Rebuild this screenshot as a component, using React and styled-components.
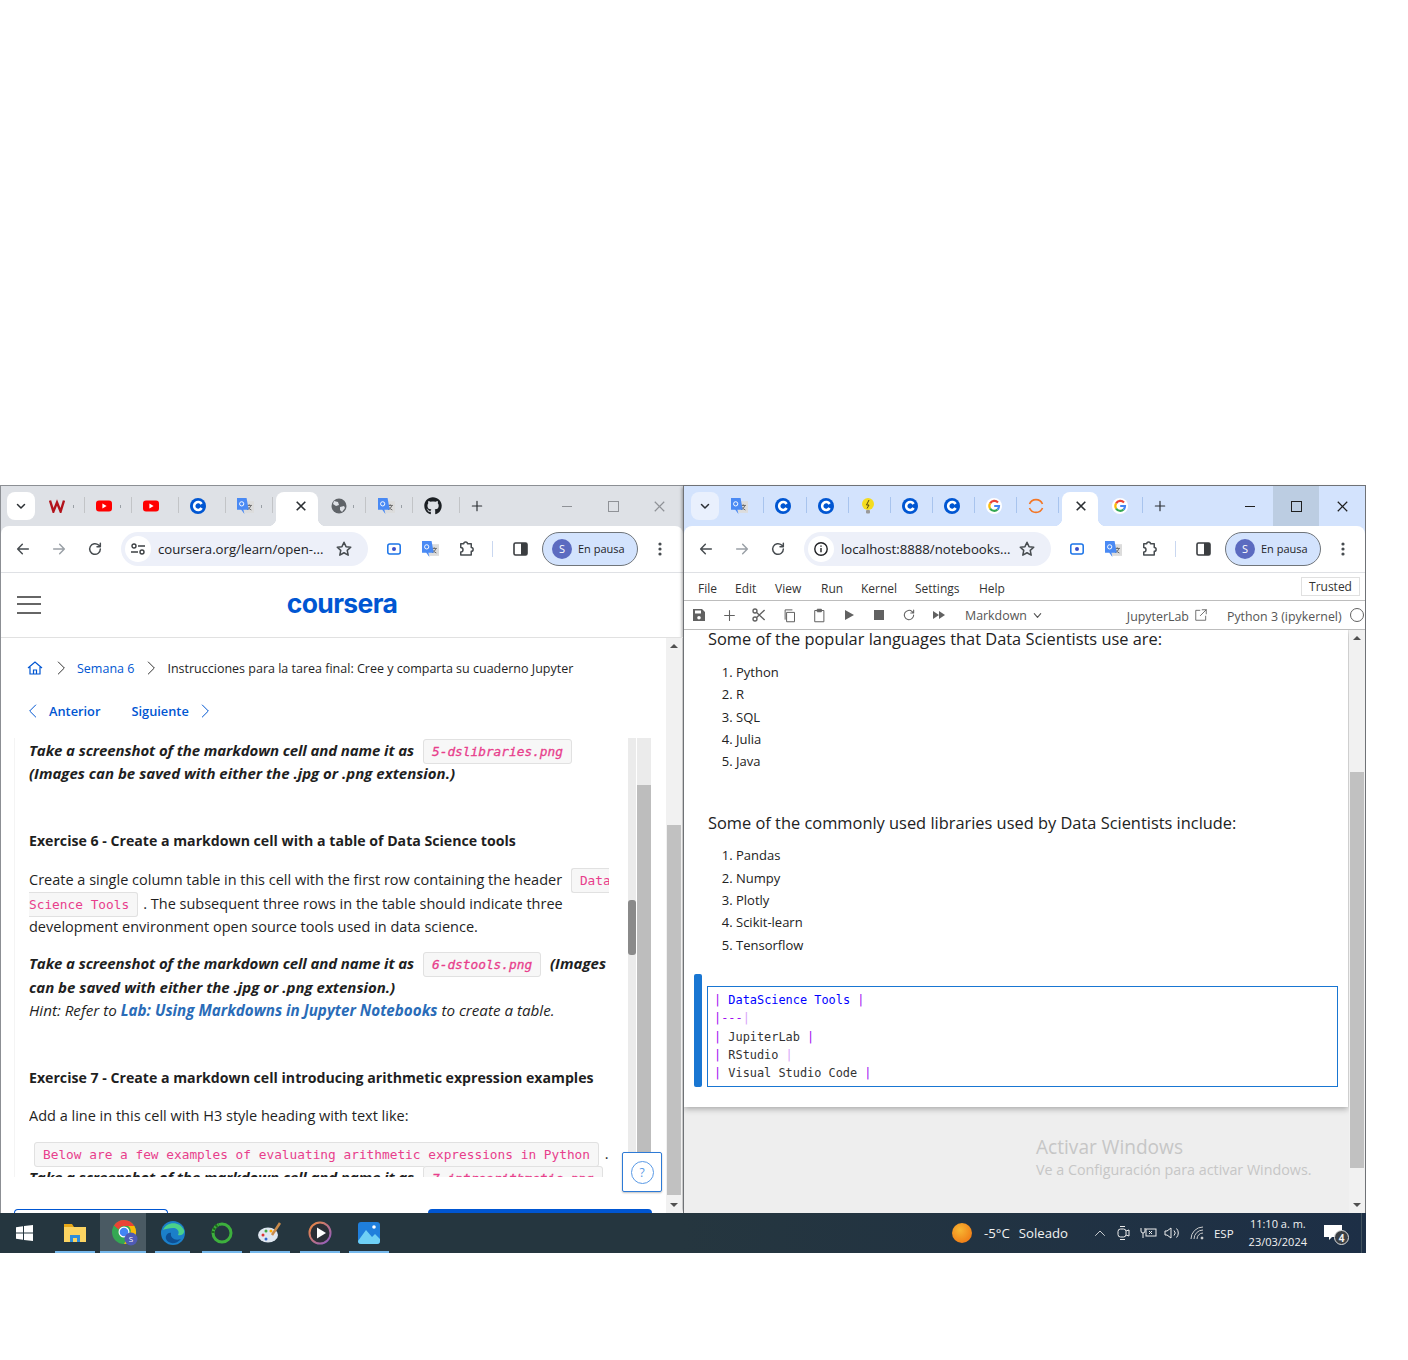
import React from "react";
import styled, { createGlobalStyle } from "styled-components";
import { FaGithub } from "react-icons/fa";

const uiFont = `"Open Sans", "Noto Sans", sans-serif`;
const monoFont = `"DejaVu Sans Mono", "Liberation Mono", monospace`;

const Global = createGlobalStyle`
  html, body { margin: 0; padding: 0; background: #fff; }
  body { font-family: ${uiFont}; width: 1408px; height: 1360px; overflow: hidden; }
`;

const Desktop = styled.div`
  width: 1366px;
  height: 768px;
  margin-top: 485px;
  display: flex;
  flex-direction: column;
`;

const Windows = styled.div`
  display: flex;
  height: 728px;
`;

const Win = styled.div`
  width: 683px;
  display: flex;
  flex-direction: column;
  border: 1px solid ${p => p.$edge};
  border-bottom: 0;
  border-right-width: ${p => p.$rightEdge}px;
  box-sizing: border-box;
  background: #fff;
  overflow: hidden;
  box-shadow: ${p => (p.$front ? "-3px 0 3px -2px rgba(0, 0, 0, 0.35)" : "none")};
`;

const TabStrip = styled.div`
  height: 40px;
  flex: none;
  display: flex;
  align-items: center;
  padding-left: ${p => p.$pad}px;
  background: ${p => p.$bg};
  color: #2b2f33;
`;

const TabMenu = styled.div`
  width: 28px;
  height: 28px;
  margin-right: 3px;
  border-radius: 8px;
  background: ${p => p.$bg};
  display: flex;
  align-items: center;
  justify-content: center;
`;

const Tab = styled.div`
  width: ${p => p.$w}px;
  height: 40px;
  box-sizing: border-box;
  padding-left: ${p => p.$pad}px;
  display: flex;
  align-items: center;
  flex: none;
  position: relative;
  &::after {
    content: "";
    position: absolute;
    right: 0;
    top: 11px;
    height: 16px;
    width: 1px;
    background: ${p => p.$sep};
  }
`;

const TabDot = styled.span`
  position: absolute;
  left: 35px;
  top: 19px;
  width: 1px;
  height: 3px;
  background: #9aa0a6;
`;

const ActiveTab = styled.div`
  width: ${p => p.$w}px;
  height: 34px;
  margin: 6px 0 0 ${p => p.$left}px;
  flex: none;
  background: #fff;
  border-radius: 8px 8px 0 0;
  display: flex;
  align-items: center;
  justify-content: center;
  padding: 0 0 6px ${p => p.$nudge}px;
  box-sizing: border-box;
  position: relative;
  &::before, &::after {
    content: "";
    position: absolute;
    bottom: 0;
    width: 8px;
    height: 8px;
  }
  &::before {
    left: -8px;
    background: radial-gradient(circle at 0 0, transparent 8px, #fff 8.5px);
  }
  &::after {
    right: -8px;
    background: radial-gradient(circle at 100% 0, transparent 8px, #fff 8.5px);
  }
`;

const NewTab = styled.div`
  width: 34px;
  display: flex;
  justify-content: center;
  flex: none;
`;

const WinControls = styled.div`
  margin: 0 ${p => p.$right}px 0 auto;
  display: flex;
  height: 40px;
`;

const WinButton = styled.div`
  width: 46px;
  height: 40px;
  display: flex;
  align-items: center;
  justify-content: center;
  background: ${p => (p.$hover ? "#bccde2" : "transparent")};
  color: ${p => p.$color};
`;

const ToolbarBack = styled.div`
  background: ${p => p.$bg};
  flex: none;
`;

const Toolbar = styled.div`
  height: 47px;
  box-sizing: border-box;
  background: #fff;
  border-radius: 8px 8px 0 0;
  border-bottom: 1px solid #dfe1e5;
  display: flex;
  align-items: center;
  padding-left: 4px;
  color: #474c50;
`;

const Slot = styled.div`
  width: 36px;
  height: 36px;
  flex: none;
  margin-left: ${p => p.$left || 0}px;
  margin-right: ${p => p.$right || 0}px;
  display: flex;
  align-items: center;
  justify-content: center;
  color: ${p => p.$color || "inherit"};
`;

const UrlPill = styled.div`
  width: 247px;
  height: 34px;
  margin-left: 8px;
  flex: none;
  border-radius: 17px;
  background: #edf0f9;
  display: flex;
  align-items: center;
  padding-left: 4px;
  box-sizing: border-box;
`;

const SiteChip = styled.div`
  width: 26px;
  height: 26px;
  border-radius: 50%;
  background: #fff;
  display: flex;
  align-items: center;
  justify-content: center;
  flex: none;
`;

const UrlText = styled.div`
  margin-left: 7px;
  font-size: 13.2px;
  color: #202124;
  white-space: nowrap;
  flex: 1;
`;

const Sep = styled.div`
  width: 1px;
  height: 16px;
  margin: 0 9px 0 8px;
  background: #c9d7f0;
  flex: none;
`;

const Profile = styled.div`
  width: 96px;
  height: 34px;
  margin-left: 4px;
  border-radius: 17px;
  background: #d3e3fd;
  border: 1px solid #70757a;
  box-sizing: border-box;
  display: flex;
  align-items: center;
  padding: 0 0 1px 9px;
  flex: none;
  font-size: 11px;
  color: #1f2328;
`;

const Avatar = styled.div`
  width: 20px;
  height: 20px;
  border-radius: 50%;
  background: #5c6bc0;
  color: #fff;
  font-size: 11px;
  display: flex;
  align-items: center;
  justify-content: center;
  margin-right: 6px;
  flex: none;
`;

/* coursera side */
const SiteHeader = styled.div`
  height: 64px;
  flex: none;
  border-bottom: 1px solid #e1e1e1;
  box-sizing: content-box;
  position: relative;
  display: flex;
  align-items: center;
  justify-content: center;
`;

const Burger = styled.div`
  position: absolute;
  left: 16px;
  top: 23px;
  width: 24px;
  height: 18px;
  border-top: 2px solid #666;
  border-bottom: 2px solid #666;
  box-sizing: border-box;
  &::after {
    content: "";
    display: block;
    margin-top: 5px;
    border-top: 2px solid #666;
  }
`;

const Logo = styled.div`
  font-family: Inter, "Liberation Sans", sans-serif;
  font-weight: 700;
  font-size: 26.5px;
  letter-spacing: -0.65px;
  color: #0056d2;
  line-height: 1;
  margin-top: -4px;
`;

const PageBody = styled.div`
  flex: 1;
  display: flex;
  min-height: 0;
  position: relative;
`;

const PageMain = styled.div`
  width: 665px;
  flex: none;
  display: flex;
  flex-direction: column;
`;

const Crumbs = styled.div`
  display: flex;
  align-items: center;
  height: 20px;
  margin: 20px 0 0 26px;
  font-size: 12.5px;
  color: #1f1f1f;
  white-space: nowrap;
`;

const CrumbLink = styled.span`
  color: #0056d2;
`;

const CrumbChevron = styled.span`
  display: flex;
  margin: 0 ${p => p.$right}px 0 ${p => p.$left}px;
  color: #333;
`;

const PrevNext = styled.div`
  display: flex;
  align-items: center;
  height: 20px;
  margin: 23px 0 0 24px;
  font-size: 12.8px;
  font-weight: 600;
  color: #0056d2;
`;

const Gap = styled.span`
  display: flex;
  align-items: center;
  margin-left: ${p => p.$left}px;
  padding-top: ${p => p.$drop || 0}px;
`;

const Reading = styled.div`
  display: flex;
  height: 439px;
  margin-top: 17px;
  margin-left: 13px;
  border-left: 1px solid #f4f4f4;
`;

const ReadingText = styled.div`
  width: 580px;
  margin-left: 14px;
  overflow: hidden;
  flex: none;
  font-size: 14.5px;
  line-height: 23.4px;
  color: #1f1f1f;
  white-space: nowrap;
`;

const Para = styled.p`
  margin: ${p => p.$top || 0}px 0 0;
  font-size: ${p => p.$size || 14.5}px;
  font-weight: ${p => (p.$strong ? 700 : 400)};
  font-style: ${p => (p.$italic ? "italic" : "normal")};
`;

const Lead = styled.span`
  letter-spacing: -0.11px;
`;

const Code = styled.code`
  font-family: ${monoFont};
  font-size: 12.8px;
  line-height: 1;
  font-weight: 400;
  font-style: ${p => (p.$slant ? "italic" : "normal")};
  -webkit-text-stroke: ${p => (p.$slant ? "0.3px" : "0")};
  color: #e83e8c;
  background: #f7f7f7;
  border: 1px solid #e1e1e1;
  border-radius: 3px;
  padding: 4px 8px;
  margin: 0 ${p => p.$right || 5}px 0 5px;
`;

const DocLink = styled.span`
  color: #2a6cb8;
  font-weight: 700;
`;

const DoubleTrack = styled.div`
  display: flex;
  margin-left: 19px;
  gap: 1px;
`;

const Track = styled.div`
  width: ${p => p.$w}px;
  background: #ebebeb;
  height: 100%;
  overflow: hidden;
`;

const Thumb = styled.div`
  margin-top: ${p => p.$top}px;
  height: ${p => p.$h}px;
  background: ${p => p.$color};
  border-radius: ${p => p.$round || 0}px;
`;

const BottomBars = styled.div`
  display: flex;
  margin: auto 0 0 13px;
  height: 4px;
`;

const OutlineBar = styled.div`
  width: 154px;
  border: 1px solid #0056d2;
  border-bottom: 0;
  border-radius: 4px 4px 0 0;
  box-sizing: border-box;
`;

const SolidBar = styled.div`
  width: 224px;
  margin-left: 260px;
  background: #0056d2;
  border-radius: 4px 4px 0 0;
`;

const HelpButton = styled.div`
  position: absolute;
  left: 621px;
  top: 514px;
  width: 40px;
  height: 40px;
  box-sizing: border-box;
  border: 1px solid #2d7ad6;
  border-radius: 2px;
  background: #fff;
  box-shadow: 0 1px 2px rgba(0, 0, 0, 0.25);
  display: flex;
  align-items: center;
  justify-content: center;
`;

const HelpCircle = styled.div`
  width: 23px;
  height: 23px;
  box-sizing: border-box;
  border-radius: 50%;
  border: 1px solid #5a9ae6;
  color: #5a9ae6;
  font-size: 12px;
  display: flex;
  align-items: center;
  justify-content: center;
`;

const ScrollBar = styled.div`
  flex: none;
  width: ${p => p.$w}px;
  background: #f1f1f1;
  display: flex;
  flex-direction: column;
  align-items: center;
  padding: 0 1px;
  box-sizing: border-box;
`;

const ScrollArrow = styled.div`
  flex: none;
  height: ${p => p.$h}px;
  width: 100%;
  margin-top: ${p => (p.$up ? "0" : "auto")};
  display: flex;
  align-items: center;
  justify-content: center;
  &::after {
    content: "";
    border-left: 4px solid transparent;
    border-right: 4px solid transparent;
    border-${p => (p.$up ? "bottom" : "top")}: 4px solid #505050;
  }
`;

const ScrollThumb = styled.div`
  width: 100%;
  height: ${p => p.$h}px;
  margin-top: ${p => p.$top}px;
  background: #c1c1c1;
  flex: none;
`;

/* notebook side */
const MenuBar = styled.div`
  height: 28px;
  box-sizing: border-box;
  flex: none;
  display: flex;
  align-items: center;
  border-bottom: 1px solid #bdbdbd;
  font-size: 12px;
  color: #333;
  padding-left: 14px;
  position: relative;
`;

const MenuItem = styled.span`
  width: ${p => p.$w}px;
  flex: none;
  padding-top: 4px;
`;

const TrustedBox = styled.div`
  position: absolute;
  right: 5px;
  top: 4px;
  width: 59px;
  height: 19px;
  box-sizing: border-box;
  border: 1px solid #e0e0e0;
  display: flex;
  align-items: center;
  justify-content: center;
  font-size: 12px;
  color: #333;
`;

const NbTools = styled.div`
  height: 29px;
  box-sizing: border-box;
  flex: none;
  display: flex;
  align-items: center;
  border-bottom: 1px solid #bdbdbd;
  font-size: 12.4px;
  color: #555;
  white-space: nowrap;
`;

const NbIcon = styled.div`
  width: 30px;
  flex: none;
  display: flex;
  justify-content: center;
  color: #616161;
`;

const KernelCircle = styled.div`
  width: 14px;
  height: 14px;
  border: 1.5px solid #616161;
  border-radius: 50%;
  box-sizing: border-box;
  margin-left: 8px;
  flex: none;
`;

const NbArea = styled.div`
  flex: 1;
  display: flex;
  background: #eeeeee;
  min-height: 0;
`;

const NbScroll = styled.div`
  width: 665px;
  flex: none;
  overflow: hidden;
`;

const Sheet = styled.div`
  height: 477px;
  width: 664px;
  background: #fff;
  box-shadow: 0 2px 6px rgba(0, 0, 0, 0.3);
  padding: 0 0 0 24px;
  box-sizing: border-box;
  color: #222;
`;

const NbHeading = styled.div`
  font-size: 16.4px;
  line-height: 18px;
  margin-top: ${p => p.$top}px;
  white-space: nowrap;
`;

const NbList = styled.ol`
  margin: ${p => p.$top}px 0 0;
  padding: 0 0 0 28px;
  font-size: 13px;
  line-height: 22.3px;
`;

const Cell = styled.div`
  display: flex;
  margin: 18px 0 0 -14px;
  align-items: flex-end;
`;

const Collapser = styled.div`
  width: 8px;
  height: 113px;
  background: #1976d2;
  border-radius: 2px;
  flex: none;
`;

const Editor = styled.div`
  width: 631px;
  height: 101px;
  margin-left: 5px;
  box-sizing: border-box;
  border: 1px solid #1976d2;
  padding: 4px 0 0 6px;
  font-family: ${monoFont};
  font-size: 11.9px;
  line-height: 18.3px;
  color: #333;
  white-space: pre;
`;

const Bar = styled.span`
  color: #a010f0;
  opacity: ${p => (p.$dim ? 0.4 : 1)};
`;

const Head = styled.span`
  color: #0000ff;
`;

const Watermark = styled.div`
  margin: 28px 0 0 352px;
  color: #c6c6c6;
  white-space: nowrap;
`;

const WatermarkTitle = styled.div`
  font-size: 19.1px;
  line-height: 24px;
`;

const WatermarkSub = styled.div`
  font-size: 14.3px;
  line-height: 22px;
`;

/* taskbar */
const Taskbar = styled.div`
  height: 40px;
  flex: none;
  display: flex;
  align-items: center;
  background: linear-gradient(90deg, #25363f 0%, #25363f 50%, #1d2f46 100%);
  color: #fff;
  position: relative;
`;

const StartButton = styled.div`
  width: 49px;
  display: flex;
  justify-content: center;
  flex: none;
`;

const TaskIcon = styled.div`
  width: ${p => p.$w}px;
  height: 40px;
  margin-left: ${p => p.$left || 0}px;
  padding-left: ${p => p.$nudge || 0}px;
  flex: none;
  display: flex;
  align-items: center;
  justify-content: center;
  box-sizing: border-box;
  position: relative;
  background: ${p => (p.$active ? "#4a5a63" : "transparent")};
  &::after {
    content: "";
    position: absolute;
    bottom: 0;
    left: ${p => (p.$active ? 0 : 3)}px;
    right: ${p => (p.$active ? 0 : 3)}px;
    height: 2px;
    background: #76b9ed;
  }
`;

const Tray = styled.div`
  margin-left: auto;
  display: flex;
  align-items: center;
  height: 40px;
  font-size: 13.2px;
  color: #f2f2f2;
  white-space: nowrap;
`;

const Sun = styled.div`
  width: 20px;
  height: 20px;
  border-radius: 50%;
  background: radial-gradient(circle at 40% 35%, #f7b733, #ee6c0e);
  margin-right: 12px;
`;

const TrayGap = styled.span`
  margin-left: ${p => p.$w}px;
  display: flex;
  align-items: center;
`;

const Lang = styled.span`
  margin-left: 10px;
  font-size: 11.5px;
`;

const Clock = styled.div`
  font-size: 11px;
  line-height: 18px;
  text-align: center;
  margin-left: 15px;
`;

const Notify = styled.div`
  width: 32px;
  margin-left: 10px;
  position: relative;
  display: flex;
  justify-content: center;
`;

const NotifyCount = styled.div`
  position: absolute;
  left: 17px;
  top: 5px;
  width: 15px;
  height: 15px;
  border-radius: 50%;
  background: #3a3f44;
  border: 1px solid #ddd;
  box-sizing: border-box;
  font-size: 10px;
  font-weight: 700;
  display: flex;
  align-items: center;
  justify-content: center;
`;

const TrayEnd = styled.div`
  width: 1px;
  height: 40px;
  margin: 0 4px 0 12px;
  background: #41535f;
`;

const Ic = ({ s = 16, w = 24, children, fill = "none", stroke = "currentColor", sw = 2 }) => (
  <svg width={s} height={s} viewBox={`0 0 ${w} ${w}`} fill={fill} stroke={stroke} strokeWidth={sw} strokeLinecap="round" strokeLinejoin="round">
    {children}
  </svg>
);

const CourseraIcon = () => (
  <svg width="16" height="16" viewBox="0 0 16 16">
    <circle cx="8" cy="8" r="8" fill="#0056d2" />
    <path d="M11.6 6A4 4 0 1 0 11.6 10" fill="none" stroke="#fff" strokeWidth="2.6" />
  </svg>
);

const TranslateIcon = ({ s = 17 }) => (
  <svg width={s} height={s} viewBox="0 0 16 16">
    <rect x="6" y="3" width="10" height="11" fill="#dcdcdc" />
    <path d="M9 7h5M11.5 6v1M13 7c-.5 2-2 3.500-3.500 4M10 8.500c.8 1.200 2 2.200 3.500 2.800" stroke="#666" strokeWidth=".9" fill="none" />
    <path d="M0 0h9l2 11H6l1 4-3-4H0z" fill="#4a8af4" />
    <circle cx="4.400" cy="5.500" r="2" fill="none" stroke="#fff" strokeWidth=".9" />
  </svg>
);

const GoogleIcon = () => (
  <svg width="16" height="16" viewBox="0 0 16 16">
    <circle cx="8" cy="8" r="8" fill="#fff" />
    <g fill="none" strokeWidth="2.2">
      <path d="M12 4.400A5 5 0 0 0 4.100 5.400" stroke="#ea4335" />
      <path d="M4.100 5.400A5 5 0 0 0 4.100 10.600" stroke="#fbbc05" />
      <path d="M4.100 10.600A5 5 0 0 0 11.600 11.500" stroke="#34a853" />
      <path d="M11.600 11.500A5 5 0 0 0 13 8H8.200" stroke="#4285f4" />
    </g>
  </svg>
);

const WikiIcon = () => (
  <svg width="16" height="14" viewBox="0 0 16 14">
    <path d="M1 1.500l3.400 11 3.600-9 3.600 9 3.400-11" fill="none" stroke="#b3131b" strokeWidth="2.4" />
  </svg>
);

const YoutubeIcon = () => (
  <svg width="16" height="12" viewBox="0 0 16 12">
    <rect width="16" height="11" y=".5" rx="3" fill="#f00" />
    <path d="M6.400 3.500v5L10.600 6z" fill="#fff" />
  </svg>
);

const GlobeIcon = () => (
  <svg width="16" height="16" viewBox="0 0 16 16">
    <circle cx="8" cy="8" r="7.500" fill="#5f6368" />
    <path d="M3 3l4 1 1 3-3 1-3-2zM9 9l4-1 1 2-3 4-2-2z" fill="#dee1e6" />
  </svg>
);

const BulbIcon = () => (
  <svg width="16" height="18" viewBox="0 0 16 18">
    <circle cx="8" cy="7" r="6" fill="#f4dc1f" />
    <rect x="6" y="13" width="4" height="3.500" rx="1" fill="#9a9a9a" />
    <path d="M9 3L6.500 8H9L7 11.500" stroke="#5a4a10" fill="none" />
  </svg>
);

const RingIcon = () => (
  <svg width="16" height="16" viewBox="0 0 16 16">
    <path d="M1.500 6A7 7 0 0 1 14.500 6M14.500 10A7 7 0 0 1 1.500 10" fill="none" stroke="#f37726" strokeWidth="1.6" />
  </svg>
);

const CloseX = ({ s = 10, sw = 1.6 }) => (
  <svg width={s} height={s} viewBox="0 0 10 10" stroke="currentColor" strokeWidth={sw}>
    <path d="M.7.7l8.600 8.600M9.300.7L.7 9.300" />
  </svg>
);

const ChevronRight = ({ s = 16, sw = 1.5 }) => (
  <Ic s={s} sw={sw}><path d="M8 3l9 9-9 9" /></Ic>
);

const ChevronLeft = ({ s = 16, sw = 1.5 }) => (
  <Ic s={s} sw={sw}><path d="M16 3l-9 9 9 9" /></Ic>
);

const tabIcons = {
  wiki: <WikiIcon />,
  yt: <YoutubeIcon />,
  cou: <CourseraIcon />,
  tr: <TranslateIcon />,
  globe: <GlobeIcon />,
  gh: <FaGithub size={18} color="#1b1f23" />,
  bulb: <BulbIcon />,
  goog: <GoogleIcon />,
  ring: <RingIcon />,
};

const Strip = ({ bg, menuBg, sep, pad, before, activeW, activeLeft, nudge, after, controlColor, controlsRight, hoverMax }) => (
  <TabStrip $bg={bg} $pad={pad}>
    <TabMenu $bg={menuBg}>
      <Ic s={12} sw={3}><path d="M5 9l7 7 7-7" /></Ic>
    </TabMenu>
    {before.map(([icon, w, tabPad, dot], i) => (
      <Tab key={i} $w={w} $pad={tabPad} $sep={sep}>{tabIcons[icon]}{dot && <TabDot />}</Tab>
    ))}
    <ActiveTab $w={activeW} $left={activeLeft} $nudge={nudge}><CloseX /></ActiveTab>
    {after.map(([icon, w, tabPad, dot], i) => (
      <Tab key={i} $w={w} $pad={tabPad} $sep={sep}>{tabIcons[icon]}{dot && <TabDot />}</Tab>
    ))}
    <NewTab><Ic s={14}><path d="M12 4v16M4 12h16" /></Ic></NewTab>
    <WinControls $right={controlsRight}>
      <WinButton $color={controlColor}><svg width="10" height="10" stroke="currentColor"><path d="M0 5.500h10" /></svg></WinButton>
      <WinButton $color={controlColor} $hover={hoverMax}><svg width="11" height="11" fill="none" stroke="currentColor"><rect x=".5" y=".5" width="10" height="10" /></svg></WinButton>
      <WinButton $color={controlColor}><CloseX s={11} sw={1.1} /></WinButton>
    </WinControls>
  </TabStrip>
);

const Address = ({ bg, chip, url }) => (
  <ToolbarBack $bg={bg}>
    <Toolbar>
      <Slot><Ic s={16} sw={2.2}><path d="M20 12H5M11 5l-7 7 7 7" /></Ic></Slot>
      <Slot $color="#9aa0a6"><Ic s={16} sw={2.2}><path d="M4 12h15M13 5l7 7-7 7" /></Ic></Slot>
      <Slot><Ic s={16} sw={2.2}><path d="M20 12a8 8 0 1 1-2.600-5.900L20 8.500M20 3.500v5h-5" /></Ic></Slot>
      <UrlPill>
        <SiteChip>{chip}</SiteChip>
        <UrlText>{url}</UrlText>
        <Slot $left={-8} $right={6}><Ic s={18} sw={2}><path d="M12 3l2.700 5.900 6.300.7-4.700 4.300 1.300 6.300L12 17l-5.600 3.200 1.300-6.300L3 9.600l6.300-.7z" /></Ic></Slot>
      </UrlPill>
      <Slot $left={8}>
        <svg width="14" height="12" viewBox="0 0 14 12"><rect x=".8" y="1" width="12.400" height="10" rx="2" fill="none" stroke="#1a73e8" strokeWidth="1.5" /><circle cx="7" cy="6" r="2" fill="#3c4fc9" /></svg>
      </Slot>
      <Slot><TranslateIcon /></Slot>
      <Slot>
        <Ic s={18} sw={2}><path d="M9 5a2.500 2.500 0 0 1 5 0h5v5a2.500 2.500 0 0 1 0 5v5H5v-4a2.500 2.500 0 0 0 0-6V5z" /></Ic>
      </Slot>
      <Sep />
      <Slot>
        <svg width="15" height="14" viewBox="0 0 15 14"><rect x="1" y="1" width="13" height="12" rx="1.500" fill="#fff" stroke="#3a3d40" strokeWidth="1.6" /><rect x="8" y="1" width="6" height="12" fill="#3a3d40" /></svg>
      </Slot>
      <Profile><Avatar>S</Avatar>En pausa</Profile>
      <Slot $left={4}>
        <svg width="4" height="14" viewBox="0 0 4 14" fill="currentColor"><circle cx="2" cy="2" r="1.600" /><circle cx="2" cy="7" r="1.600" /><circle cx="2" cy="12" r="1.600" /></svg>
      </Slot>
    </Toolbar>
  </ToolbarBack>
);

const SiteTuneIcon = () => (
  <svg width="14" height="12" viewBox="0 0 14 12" fill="none" stroke="#3c4043" strokeWidth="1.4">
    <circle cx="3" cy="3" r="2" /><path d="M7 3h7M0 9h7" /><circle cx="11" cy="9" r="2" />
  </svg>
);

const InfoIcon = () => (
  <svg width="14" height="14" viewBox="0 0 14 14" fill="none" stroke="#202124" strokeWidth="1.4">
    <circle cx="7" cy="7" r="6.200" /><path d="M7 6v4.200M7 3.400v1.400" />
  </svg>
);

const LeftWindow = () => (
  <Win $edge="#8c8f94" $rightEdge={0}>
    <Strip
      bg="#dee1e6"
      menuBg="#fff"
      sep="#c2c4c7"
      pad={6}
      before={[["wiki", 47, 11, true], ["yt", 47, 11, true], ["yt", 47, 11], ["cou", 47, 11], ["tr", 47, 11, true]]}
      activeW={42}
      activeLeft={3}
      nudge={8}
      after={[["globe", 48, 13, true], ["tr", 47, 12, true], ["gh", 47, 11]]}
      controlColor="#8f9297"
      controlsRight={1}
    />
    <Address bg="#dee1e6" chip={<SiteTuneIcon />} url="coursera.org/learn/open-..." />
    <SiteHeader>
      <Burger />
      <Logo>coursera</Logo>
    </SiteHeader>
    <PageBody>
      <PageMain>
        <Crumbs>
          <svg width="16" height="14" viewBox="0 0 16 14" fill="none" stroke="#0056d2" strokeWidth="1.2"><path d="M1 7l7-6 7 6M3 6v7h10V6M6.500 13V9h3v4" /></svg>
          <CrumbChevron $left={10} $right={8}><ChevronRight /></CrumbChevron>
          <CrumbLink>Semana 6</CrumbLink>
          <CrumbChevron $left={9} $right={8}><ChevronRight /></CrumbChevron>
          <span>Instrucciones para la tarea final: Cree y comparta su cuaderno Jupyter</span>
        </Crumbs>
        <PrevNext>
          <ChevronLeft />
          <Gap $left={8}>Anterior</Gap>
          <Gap $left={31}>Siguiente</Gap>
          <Gap $left={8}><ChevronRight /></Gap>
        </PrevNext>
        <Reading>
          <ReadingText>
            <Para $strong $italic $size={15} $top={1}>
              <Lead>Take a screenshot of the markdown cell and name it as</Lead> <Code $slant>5-dslibraries.png</Code><br />
              (Images can be saved with either the .jpg or .png extension.)
            </Para>
            <Para $strong $size={14.15} $top={43}>Exercise 6 - Create a markdown cell with a table of Data Science tools</Para>
            <Para $top={16}>
              Create a single column table in this cell with the first row containing the header <Code>Data<br />Science Tools</Code>. The subsequent three rows in the table should indicate three<br />
              development environment open source tools used in data science.
            </Para>
            <Para $top={14} $strong $italic $size={15}>
              <Lead>Take a screenshot of the markdown cell and name it as</Lead> <Code $slant>6-dstools.png</Code> (Images<br />
              can be saved with either the .jpg or .png extension.)
            </Para>
            <Para $italic $size={15.2}>Hint: Refer to <DocLink>Lab: Using Markdowns in Jupyter Notebooks</DocLink> to create a table.</Para>
            <Para $strong $size={14.15} $top={43}>Exercise 7 - Create a markdown cell introducing arithmetic expression examples</Para>
            <Para $top={15}>Add a line in this cell with H3 style heading with text like:</Para>
            <Para $top={15}>
              <Code $right={2}>Below are a few examples of evaluating arithmetic expressions in Python</Code> .
            </Para>
            <Para $strong $italic $size={15}>
              <Lead>Take a screenshot of the markdown cell and name it as</Lead> <Code $slant>7-introarithmetic.png</Code>
            </Para>
          </ReadingText>
          <DoubleTrack>
            <Track $w={8}><Thumb $top={162} $h={55} $color="#8a8a8a" $round={3} /></Track>
            <Track $w={14}><Thumb $top={47} $h={392} $color="#bdbdbd" /></Track>
          </DoubleTrack>
        </Reading>
        <BottomBars>
          <OutlineBar />
          <SolidBar />
        </BottomBars>
      </PageMain>
      <ScrollBar $w={16}>
        <ScrollArrow $up $h={16} />
        <ScrollThumb $top={171} $h={370} />
        <ScrollArrow $h={16} />
      </ScrollBar>
      <HelpButton><HelpCircle>?</HelpCircle></HelpButton>
    </PageBody>
  </Win>
);

const tableBar = dim => <Bar $dim={dim}>|</Bar>;

const RightWindow = () => (
  <Win $edge="#6f7276" $rightEdge={1} $front>
    <Strip
      bg="#d3e3fd"
      menuBg="#e9f0fd"
      sep="#a8c4ee"
      pad={7}
      before={[["tr", 42, 9], ["cou", 43, 11], ["cou", 42, 11], ["bulb", 42, 11], ["cou", 42, 11], ["cou", 42, 11], ["goog", 42, 11], ["ring", 42, 11]]}
      activeW={36}
      activeLeft={3}
      nudge={2}
      after={[["goog", 45, 14]]}
      controlColor="#1f1f1f"
      controlsRight={0}
      hoverMax
    />
    <Address bg="#d3e3fd" chip={<InfoIcon />} url="localhost:8888/notebooks..." />
    <MenuBar>
      <MenuItem $w={37}>File</MenuItem>
      <MenuItem $w={40}>Edit</MenuItem>
      <MenuItem $w={46}>View</MenuItem>
      <MenuItem $w={40}>Run</MenuItem>
      <MenuItem $w={54}>Kernel</MenuItem>
      <MenuItem $w={64}>Settings</MenuItem>
      <MenuItem $w={40}>Help</MenuItem>
      <TrustedBox>Trusted</TrustedBox>
    </MenuBar>
    <NbTools>
      <NbIcon><svg width="12" height="12" viewBox="0 0 12 12" fill="#616161"><path d="M0 0h9l3 3v9H0zM2 1.500v3h6v-3zM6 7a1.800 1.800 0 1 0 0 3.600A1.800 1.800 0 0 0 6 7z" fillRule="evenodd" /></svg></NbIcon>
      <NbIcon><Ic s={13} sw={2}><path d="M12 3v18M3 12h18" /></Ic></NbIcon>
      <NbIcon><Ic s={16} sw={2}><circle cx="6" cy="6" r="3" /><circle cx="6" cy="18" r="3" /><path d="M8 8l12 11M8 16L20 5" /></Ic></NbIcon>
      <NbIcon><Ic s={15} sw={1.6}><rect x="8" y="7" width="12" height="15" /><path d="M5 18V3h11" /></Ic></NbIcon>
      <NbIcon><Ic s={15} sw={1.6}><rect x="5" y="4" width="14" height="18" /><rect x="9" y="2" width="6" height="4" fill="currentColor" /></Ic></NbIcon>
      <NbIcon><svg width="9" height="10" fill="#616161"><path d="M0 0l9 5-9 5z" /></svg></NbIcon>
      <NbIcon><svg width="10" height="10" fill="#616161"><rect width="10" height="10" /></svg></NbIcon>
      <NbIcon><Ic s={14} sw={1.8}><path d="M20 12a8 8 0 1 1-2.600-5.900L20 8.500M20 3.500v5h-5" /></Ic></NbIcon>
      <NbIcon><svg width="12" height="10" fill="#616161"><path d="M0 1l6 4-6 4zM6 1l6 4-6 4z" /></svg></NbIcon>
      <Gap $left={11}>Markdown</Gap>
      <Gap $left={5}><Ic s={11} sw={2.4}><path d="M5 8l7 8 7-8" /></Ic></Gap>
      <Gap $left={84} $drop={2}>JupyterLab</Gap>
      <Gap $left={5}><Ic s={14} sw={1.4}><path d="M10 4H3v17h17v-7M14 3h7v7M21 3L11 13" /></Ic></Gap>
      <Gap $left={19} $drop={2}>Python 3 (ipykernel)</Gap>
      <KernelCircle />
    </NbTools>
    <NbArea>
      <NbScroll>
        <Sheet>
          <NbHeading $top={0}>Some of the popular languages that Data Scientists use are:</NbHeading>
          <NbList $top={13}>
            <li>Python</li><li>R</li><li>SQL</li><li>Julia</li><li>Java</li>
          </NbList>
          <NbHeading $top={42}>Some of the commonly used libraries used by Data Scientists include:</NbHeading>
          <NbList $top={12}>
            <li>Pandas</li><li>Numpy</li><li>Plotly</li><li>Scikit-learn</li><li>Tensorflow</li>
          </NbList>
          <Cell>
            <Collapser />
            <Editor>
              {tableBar()} <Head>DataScience Tools</Head> {tableBar()}{"\n"}
              <Bar>|---</Bar>{tableBar(true)}{"\n"}
              {tableBar()} JupiterLab {tableBar()}{"\n"}
              {tableBar()} RStudio {tableBar(true)}{"\n"}
              {tableBar()} Visual Studio Code {tableBar()}
            </Editor>
          </Cell>
        </Sheet>
        <Watermark>
          <WatermarkTitle>Activar Windows</WatermarkTitle>
          <WatermarkSub>Ve a Configuración para activar Windows.</WatermarkSub>
        </Watermark>
      </NbScroll>
      <ScrollBar $w={16}>
        <ScrollArrow $up $h={16} />
        <ScrollThumb $top={126} $h={396} />
        <ScrollArrow $h={16} />
      </ScrollBar>
    </NbArea>
  </Win>
);

const FolderIcon = () => (
  <svg width="22" height="20" viewBox="0 0 22 20">
    <path d="M0 1h8l2 3H0z" fill="#e8a817" />
    <rect y="4" width="22" height="15" fill="#fcd462" />
    <rect x="6" y="12" width="10" height="7" fill="#2f8fdc" />
    <rect x="9" y="15" width="4" height="4" fill="#fcd462" />
  </svg>
);

const ChromeIcon = () => (
  <svg width="26" height="26" viewBox="0 0 26 26">
    <circle cx="12" cy="12" r="12" fill="#34a853" />
    <path d="M12 0a12 12 0 0 1 10.400 6H12a6 6 0 0 0-5.400 3.400L2 5.500A12 12 0 0 1 12 0z" fill="#ea4335" />
    <path d="M22.400 6A12 12 0 0 1 12 24l5.200-9a6 6 0 0 0-1-9z" fill="#fbbc05" />
    <circle cx="12" cy="12" r="5.500" fill="#fff" /><circle cx="12" cy="12" r="4.300" fill="#4285f4" />
    <circle cx="19" cy="19" r="6.500" fill="#4f5bb5" />
    <text x="19" y="22" fontSize="8" fill="#fff" textAnchor="middle" fontFamily="Open Sans">S</text>
  </svg>
);

const EdgeIcon = () => (
  <svg width="24" height="24" viewBox="0 0 24 24">
    <circle cx="12" cy="12" r="12" fill="#1b7fc9" />
    <path d="M2 9C5 1 18-1 23 9c1 4-3 6-6 5 2-4-1-7-5-7-4 0-8 1-10 2z" fill="#4bd08a" />
    <path d="M10 12c-1 5 4 8 10 6-5 6-13 5-15 0-1-3 2-7 5-6z" fill="#0d4f94" />
  </svg>
);

const RingTask = () => (
  <svg width="22" height="22" viewBox="0 0 22 22">
    <circle cx="11" cy="11" r="9" fill="none" stroke="#3db03d" strokeWidth="3" />
    <path d="M2 11A9 9 0 0 1 8 2.500" fill="none" stroke="#1d6a1d" strokeWidth="3" strokeDasharray="2 1.500" />
  </svg>
);

const PaletteIcon = () => (
  <svg width="24" height="24" viewBox="0 0 24 24">
    <ellipse cx="10" cy="14" rx="10" ry="7.500" fill="#dfe7f0" />
    <circle cx="5" cy="14" r="1.500" fill="#d33" /><circle cx="8" cy="10" r="1.500" fill="#4a4" />
    <circle cx="13" cy="10" r="1.500" fill="#fa0" /><circle cx="8" cy="18" r="1.500" fill="#36c" />
    <path d="M14 14L22 2" stroke="#c98a4a" strokeWidth="2.500" />
  </svg>
);

const PlayerIcon = () => (
  <svg width="24" height="24" viewBox="0 0 24 24">
    <defs>
      <linearGradient id="pl" x1="0" y1="0" x2="1" y2="1"><stop offset="0" stopColor="#f08a3c" /><stop offset="1" stopColor="#8a5ac8" /></linearGradient>
    </defs>
    <circle cx="12" cy="12" r="10.500" fill="#2a2f36" stroke="url(#pl)" strokeWidth="2" />
    <path d="M9 6.500v11l9-5.500z" fill="#fff" />
  </svg>
);

const PhotosIcon = () => (
  <svg width="22" height="22" viewBox="0 0 22 22">
    <rect width="22" height="22" rx="3" fill="#1f7fdc" />
    <path d="M0 19L8 8l6 7 3-3 5 5v2a3 3 0 0 1-3 3H3a3 3 0 0 1-3-3z" fill="#6ed0f5" />
    <circle cx="16" cy="5" r="1.800" fill="#fff" />
  </svg>
);

const TrayIcons = () => (
  <>
    <TrayGap $w={26}><Ic s={12} sw={1.600}><path d="M3 17l9-9 9 9" /></Ic></TrayGap>
    <TrayGap $w={11}><svg width="14" height="18" viewBox="0 0 14 18" fill="none" stroke="#eee"><rect x="1" y="5" width="8" height="8" rx="2.500" /><path d="M9 7l3-1v6l-3-1M3 2.500h5M3 15.500h5" /></svg></TrayGap>
    <TrayGap $w={8}><svg width="18" height="14" viewBox="0 0 18 14" fill="none" stroke="#eee"><path d="M2 2v3a2 2 0 0 0 4 0V2M4 7v5" /><rect x="7" y="3" width="10" height="7" /><path d="M10 5l3 3M13 5l-3 3" /></svg></TrayGap>
    <TrayGap $w={7}><svg width="16" height="14" viewBox="0 0 16 14" fill="none" stroke="#eee"><path d="M1 5v4h2l4 3V2L3 5zM10 4.500a3.500 3.500 0 0 1 0 5M12.500 2.500a6.500 6.500 0 0 1 0 9" /></svg></TrayGap>
    <TrayGap $w={10}><svg width="14" height="14" viewBox="0 0 14 14" fill="none" stroke="#ccc"><path d="M1 13A12 12 0 0 1 13 1M4 13a9 9 0 0 1 9-9M7 13a6 6 0 0 1 6-6" /><circle cx="12" cy="12" r="1" fill="#fff" /></svg></TrayGap>
  </>
);

export default function App() {
  return (
    <>
      <Global />
      <Desktop>
        <Windows>
          <LeftWindow />
          <RightWindow />
        </Windows>
        <Taskbar>
          <StartButton>
            <svg width="17" height="16" viewBox="0 0 17 16" fill="#fff"><path d="M0 2.300l7-1v6.200H0zM8 1.100L17 0v7.500H8zM0 8.500h7v6.200l-7-1zM8 8.500h9V16l-9-1.100z" /></svg>
          </StartButton>
          <TaskIcon $w={46} $left={3}><FolderIcon /></TaskIcon>
          <TaskIcon $w={46} $left={2} $active $nudge={4}><ChromeIcon /></TaskIcon>
          <TaskIcon $w={41} $left={6}><EdgeIcon /></TaskIcon>
          <TaskIcon $w={46} $left={6}><RingTask /></TaskIcon>
          <TaskIcon $w={46} $left={2}><PaletteIcon /></TaskIcon>
          <TaskIcon $w={46} $left={4}><PlayerIcon /></TaskIcon>
          <TaskIcon $w={46} $left={3}><PhotosIcon /></TaskIcon>
          <Tray>
            <Sun />
            -5°C<TrayGap $w={9}>Soleado</TrayGap>
            <TrayIcons />
            <Lang>ESP</Lang>
            <Clock>11:10 a. m.<br />23/03/2024</Clock>
            <Notify>
              <svg width="18" height="16" viewBox="0 0 18 16" fill="#fff"><path d="M0 0h18v12H8l-3 3v-3H0z" /></svg>
              <NotifyCount>4</NotifyCount>
            </Notify>
            <TrayEnd />
          </Tray>
        </Taskbar>
      </Desktop>
    </>
  );
}
